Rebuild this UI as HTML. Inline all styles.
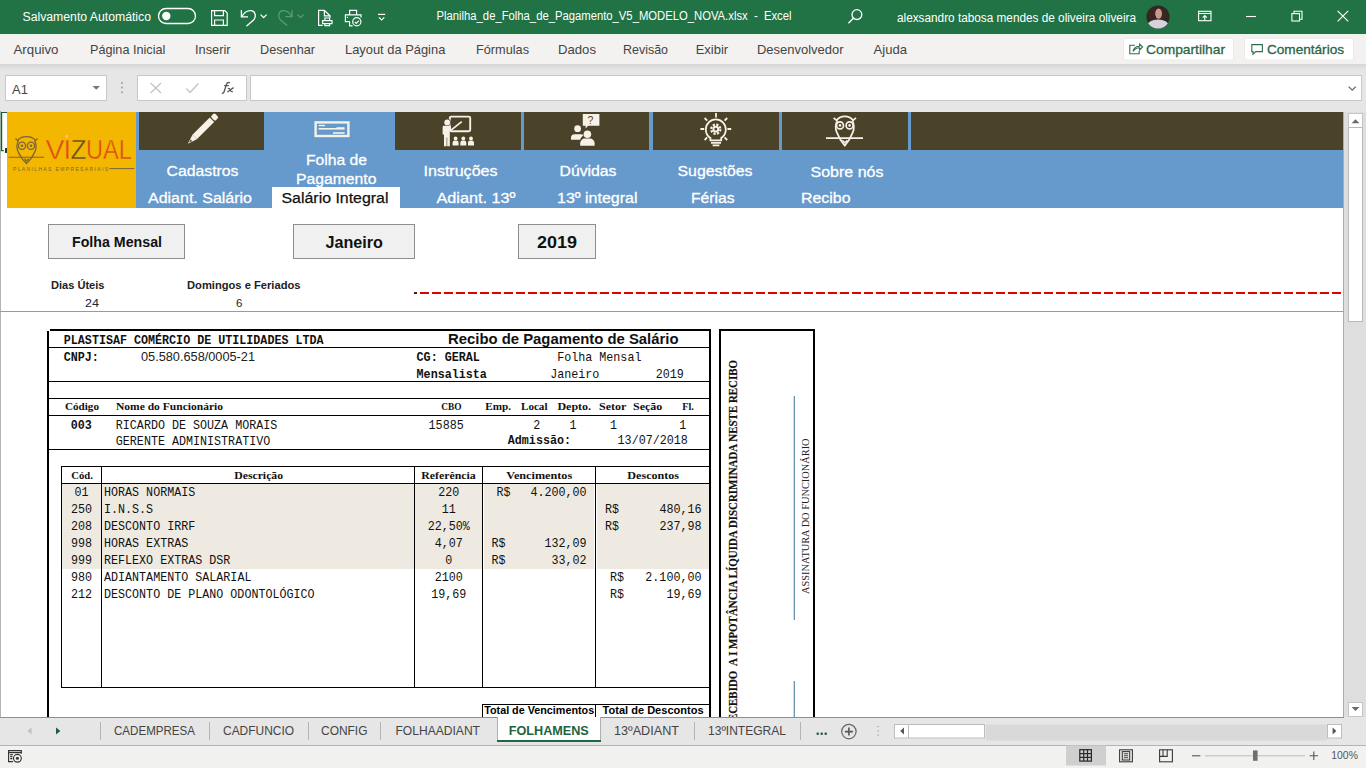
<!DOCTYPE html>
<html><head><meta charset="utf-8">
<style>
*{margin:0;padding:0;box-sizing:border-box}
html,body{width:1366px;height:768px;overflow:hidden;background:#fff}
svg{position:absolute;left:0;top:0;display:block}
text{font-family:"Liberation Sans",sans-serif;white-space:pre}
.m,.m text{font-family:"Liberation Mono",monospace}
.s,.s text{font-family:"Liberation Serif",serif}
</style></head><body>
<svg width="1366" height="768" viewBox="0 0 1366 768">
<defs>
<linearGradient id="shade" x1="0" y1="0" x2="0" y2="1">
<stop offset="0" stop-color="#d6d6d6"/><stop offset="1" stop-color="#e6e6e6"/>
</linearGradient>
</defs>
<!-- ===== TITLE BAR ===== -->
<g id="titlebar">
<rect x="0" y="0" width="1366" height="34" fill="#217346"/>
<text x="22.5" y="21" font-size="12.5" fill="#fff" textLength="128.5" lengthAdjust="spacingAndGlyphs">Salvamento Automático</text>
<rect x="158.5" y="8.5" width="37" height="15" rx="7.5" fill="none" stroke="#fff" stroke-width="1.3"/>
<circle cx="166.3" cy="16" r="4.2" fill="#fff"/>
<!-- save -->
<g fill="none" stroke="#fff" stroke-width="1.2">
<path d="M211.6 10.6h13.2l2.4 2.4v12.4h-15.6z"/>
<path d="M214.6 10.6v5h8.8v-5"/>
<path d="M214.6 25.4v-5.4h8.8v5.4"/>
</g>
<!-- undo -->
<g fill="none" stroke="#fff" stroke-width="1.3">
<path d="M241.4 10v6.8h6.6"/>
<path d="M241.9 16.3C244.6 12 248.4 10.2 251.4 10.7C255.6 11.5 256.4 16.6 253.8 19.8L246.4 26.2"/>
<path d="M260.6 14.6l3 3l3-3"/>
</g>
<!-- redo faded -->
<g fill="none" stroke="#5a9a76" stroke-width="1.3">
<path d="M292.1 10v6.6h-6.6"/>
<path d="M291.6 16.1C289 12 285.5 10.2 282.5 10.6C278.4 11.4 277.6 16.6 280.2 19.8L287.2 25.4"/>
<path d="M297.6 14.6l3 3l3-3"/>
</g>
<!-- print preview -->
<g fill="none" stroke="#fff" stroke-width="1.2">
<path d="M322.6 25.4h-4v-15h5.8l5.6 5.4v2"/>
<path d="M324.4 10.4v5.4h5.6"/>
<rect x="322.6" y="20.6" width="9.4" height="3"/>
<path d="M324.9 20.6v-2.6h4.7v2.6M324.9 23.6v2h4.7v-2"/>
</g>
<!-- print check -->
<g fill="none" stroke="#fff" stroke-width="1.2">
<path d="M349.6 14.8v-4.4h7v4.4"/>
<path d="M349.6 21.6h-4.2v-6.8h15.6v2.6"/>
<path d="M349.6 21.6v4.2h3"/>
<circle cx="356.8" cy="21.8" r="4.1"/>
<path d="M354.8 21.8l1.5 1.5l2.6-2.6"/>
</g>
<circle cx="347.4" cy="17.4" r="0.7" fill="#fff"/>
<!-- customize -->
<g fill="none" stroke="#fff" stroke-width="1.2">
<path d="M378 14.4h7.2"/>
<path d="M378.9 17.4l2.7 2.5l2.7-2.5"/>
</g>
<text x="436.5" y="20" font-size="12.3" fill="#fff" textLength="355" lengthAdjust="spacingAndGlyphs">Planilha_de_Folha_de_Pagamento_V5_MODELO_NOVA.xlsx  -  Excel</text>
<!-- search -->
<g fill="none" stroke="#fff" stroke-width="1.3">
<circle cx="856.9" cy="14.6" r="4.9"/>
<path d="M853.4 18.2l-5 5"/>
</g>
<text x="897" y="21.5" font-size="12.5" fill="#fff" textLength="239" lengthAdjust="spacingAndGlyphs">alexsandro tabosa mendes de oliveira oliveira</text>
<!-- avatar -->
<clipPath id="av"><circle cx="1158" cy="17" r="11.6"/></clipPath>
<g clip-path="url(#av)">
<rect x="1146" y="5" width="24" height="24" fill="#2c2a22"/>
<ellipse cx="1157" cy="15" rx="8.5" ry="8" fill="#3d2622"/>
<ellipse cx="1158.6" cy="13.6" rx="3.4" ry="5.2" fill="#c89a8e"/>
<ellipse cx="1158" cy="25.6" rx="10.8" ry="6" fill="#d6d3dd"/>
</g>
<!-- ribbon display -->
<g fill="none" stroke="#fff" stroke-width="1.1">
<rect x="1198.6" y="11.3" width="12.4" height="9.4"/>
<path d="M1198.6 13.5h12.4"/>
<path d="M1204.8 20.4v-4.8M1202.7 17.6l2.1-2.1l2.1 2.1"/>
</g>
<!-- minimize -->
<path d="M1246 16.5h10" stroke="#fff" stroke-width="1.1"/>
<!-- restore -->
<g fill="none" stroke="#fff" stroke-width="1.1">
<rect x="1291.9" y="13.6" width="7.6" height="7.4"/>
<path d="M1294 13.6v-2.3h8v8h-2.5"/>
</g>
<!-- close -->
<path d="M1337.6 10.8l10.6 10.6M1348.2 10.8l-10.6 10.6" stroke="#fff" stroke-width="1.15"/>
</g>
<!-- ===== MENU ===== -->
<g id="menubar">
<rect x="0" y="34" width="1366" height="30" fill="#f3f2f1"/>
<rect x="0" y="34" width="1366" height="1.4" fill="#e9f6ec"/>
<g font-size="13" fill="#444">
<text x="13.5" y="54" textLength="45" lengthAdjust="spacingAndGlyphs">Arquivo</text>
<text x="90" y="54" textLength="75.3" lengthAdjust="spacingAndGlyphs">Página Inicial</text>
<text x="195" y="54" textLength="35.5" lengthAdjust="spacingAndGlyphs">Inserir</text>
<text x="260" y="54" textLength="55" lengthAdjust="spacingAndGlyphs">Desenhar</text>
<text x="345" y="54" textLength="100.3" lengthAdjust="spacingAndGlyphs">Layout da Página</text>
<text x="476" y="54" textLength="53" lengthAdjust="spacingAndGlyphs">Fórmulas</text>
<text x="558" y="54" textLength="38" lengthAdjust="spacingAndGlyphs">Dados</text>
<text x="623" y="54" textLength="45" lengthAdjust="spacingAndGlyphs">Revisão</text>
<text x="695.7" y="54" textLength="32.5" lengthAdjust="spacingAndGlyphs">Exibir</text>
<text x="757" y="54" textLength="86.5" lengthAdjust="spacingAndGlyphs">Desenvolvedor</text>
<text x="873.5" y="54" textLength="33.5" lengthAdjust="spacingAndGlyphs">Ajuda</text>
</g>
<rect x="1123.5" y="38.5" width="110" height="21.5" rx="2" fill="#fff" stroke="#ecebe9"/>
<g fill="none" stroke="#2d6d4a" stroke-width="1.1">
<path d="M1135 45.2h-5.2v8.6h9.4v-3"/>
<path d="M1133 51.4c0.6-3.4 3-5.2 6.6-5.2v-2.2l3 3l-3 3v-2.2c-2.8 0-4.8 1-6.6 3.6z"/>
</g>
<text x="1146" y="54" font-size="13.4" fill="#2a6646" stroke="#2a6646" stroke-width="0.3" textLength="79" lengthAdjust="spacingAndGlyphs">Compartilhar</text>
<rect x="1244.5" y="38.5" width="109" height="21.5" rx="2" fill="#fff" stroke="#ecebe9"/>
<path d="M1251.8 44.6h10.6v7h-6.6l-2.8 2.6v-2.6h-1.2z" fill="none" stroke="#2d6d4a" stroke-width="1.1"/>
<text x="1267" y="54" font-size="13.4" fill="#2a6646" stroke="#2a6646" stroke-width="0.3" textLength="77" lengthAdjust="spacingAndGlyphs">Comentários</text>
</g>
<!-- ===== FORMULA BAR ===== -->
<g id="formulabar">
<rect x="0" y="64" width="1366" height="48" fill="#e6e6e6"/>
<rect x="0" y="64" width="1366" height="6" fill="url(#shade)"/>
<rect x="5.5" y="75.5" width="101" height="25" fill="#fff" stroke="#c8c8c8"/>
<text x="12.1" y="93.5" font-size="13" fill="#444" textLength="15.8" lengthAdjust="spacingAndGlyphs">A1</text>
<path d="M92.5 86h7.5l-3.75 3.8z" fill="#777"/>
<g fill="#a0a0a0"><circle cx="122" cy="83" r="1"/><circle cx="122" cy="87.6" r="1"/><circle cx="122" cy="92.2" r="1"/></g>
<rect x="137.5" y="75.5" width="109" height="25" fill="#fff" stroke="#c8c8c8"/>
<path d="M150.6 83l10.4 10M161 83l-10.4 10" stroke="#c4c4c4" stroke-width="1.3"/>
<path d="M186.4 88.4l3.6 4l8.4-9" fill="none" stroke="#c4c4c4" stroke-width="1.4"/>
<g fill="none" stroke="#5a5a5a" stroke-width="1.35" stroke-linecap="round">
<path d="M222.4 93.4c1 -0.2 1.6-1 2-2.4l2-6.6c0.5-1.6 1.4-2.2 3-1.8"/>
<path d="M224.6 85.6h3.8"/>
<path d="M228.4 88.4c1 0 1.4 0.4 1.8 1.4l0.6 1.2c0.4 0.6 0.8 0.8 1.6 0.6M233.2 87.9l-5.4 3.9"/>
</g>
<rect x="250.5" y="75.5" width="1111" height="25" fill="#fff" stroke="#c8c8c8"/>
<path d="M1348.6 86.6l3.6 3.6l3.6-3.6" fill="none" stroke="#666" stroke-width="1.3"/>
</g>
<!-- ===== GRID ===== -->
<g id="grid">
<rect x="0" y="112" width="1343" height="605" fill="#fff"/>
<rect x="0" y="111" width="1" height="606" fill="#b4b4b4"/>
<!-- selection A1 -->
<rect x="0" y="111" width="1" height="42" fill="#94b49c"/>
<rect x="1" y="112" width="1.2" height="39" fill="#1e5a3a"/>
<rect x="1" y="112" width="6" height="1" fill="#1e5a3a"/>
<rect x="1" y="150" width="2.8" height="1.2" fill="#1e5a3a"/>
<rect x="5" y="148" width="2" height="5" fill="#26402a"/>
<!-- logo -->
<rect x="7" y="112" width="129" height="96" fill="#f3b700"/>
<g id="owl" fill="none" stroke="#7b6638" stroke-width="1.3">
<path d="M17.6 140.6C19.4 137.8 22.6 136.6 26.5 136.6S33.6 137.8 35.4 140.6"/>
<path d="M15.4 138.4l3.2 2.8M37.6 138.4l-3.2 2.8"/>
<path d="M18.2 141C16.6 144.2 16.6 148.2 18 151.6C19.8 156 23 160.4 26.5 163.6C30 160.4 33.2 156 35 151.6C36.4 148.2 36.4 144.2 34.8 141"/>
<circle cx="22" cy="145.8" r="3.6"/><circle cx="31" cy="145.8" r="3.6"/>
<path d="M24.4 158.6l2.1 2.4l2.1-2.4"/>
</g>
<circle cx="22" cy="145.8" r="1.3" fill="#7b6638"/><circle cx="31" cy="145.8" r="1.3" fill="#7b6638"/>
<path d="M8.5 157.3h35.5" stroke="#7b6638" stroke-width="1.1"/>
<g font-size="27.5" stroke="#f3b700" stroke-width="0.5">
<text x="45.5" y="158.8" fill="#dc4a1e" textLength="19" lengthAdjust="spacingAndGlyphs">V</text>
<text x="63.5" y="158.8" fill="#dc4a1e">I</text>
<text x="70.5" y="158.8" fill="#5b4a2c" textLength="16" lengthAdjust="spacingAndGlyphs">Z</text>
<text x="86" y="158.8" fill="#dc4a1e" textLength="46" lengthAdjust="spacingAndGlyphs">UAL</text>
</g>
<circle cx="66.8" cy="136.5" r="1.4" fill="#f7c96a"/>
<text x="13" y="170.5" font-size="5" fill="#7b6638" textLength="95" lengthAdjust="spacing">PLANILHAS EMPRESARIAIS</text>
<path d="M109.3 168.6h25" stroke="#7b6638" stroke-width="1"/>
<!-- nav -->
<rect x="136" y="112" width="1207" height="96" fill="#6699cc"/>
<g fill="#4b4329">
<rect x="139" y="112" width="125" height="38"/>
<rect x="395" y="112" width="126" height="38"/>
<rect x="524" y="112" width="125" height="38"/>
<rect x="653" y="112" width="126" height="38"/>
<rect x="782" y="112" width="126" height="38"/>
<rect x="911" y="112" width="432" height="38"/>
</g>
<rect x="272" y="187" width="128" height="21" fill="#fff"/>
<!-- pencil -->
<g transform="translate(202.3 129.4) rotate(45)">
<rect x="-3.1" y="-20.2" width="6.2" height="5.4" rx="1.6" fill="#f6f2e8"/>
<rect x="-3.1" y="-13.6" width="6.2" height="24.4" fill="#f6f2e8"/>
<path d="M-3.1 10.8h6.2l-3.1 9.6z" fill="#f6f2e8"/>
<path d="M-1.1 15.4h2.2l-1.1 3z" fill="#4b4329"/>
</g>
<!-- cheque -->
<rect x="315.6" y="122.4" width="32.8" height="13.6" fill="none" stroke="#f6f2e8" stroke-width="2.4"/>
<g fill="#f6f2e8">
<rect x="318.6" y="124.8" width="6.4" height="1.4"/><rect x="318.6" y="128" width="26" height="1.6"/><rect x="336.5" y="127.2" width="8" height="1"/><rect x="333" y="132.2" width="11.6" height="1.6"/>
</g>
<!-- instructor -->
<rect x="449.8" y="116.6" width="20.4" height="14.6" rx="1.4" fill="none" stroke="#f6f2e8" stroke-width="1.9"/>
<g fill="#f6f2e8">
<circle cx="447.2" cy="122.4" r="3.7" fill="#4b4329"/><circle cx="447.2" cy="122.4" r="2.9"/>
<path d="M443.2 125.8h6.6l1.2 1.4v2.8l-1.2 0.8v15.4h-2.6v-8.6h-0.6v8.6h-2.6v-11.4l-0.8 -0.2l-0.6-0.4v-7z"/>
<circle cx="455.6" cy="138.4" r="1.9"/><path d="M452.6 145.6v-2.8a2.2 2.2 0 0 1 2.2-2.2h1.6a2.2 2.2 0 0 1 2.2 2.2v2.8z"/>
<circle cx="463.3" cy="138.4" r="1.9"/><path d="M460.3 145.6v-2.8a2.2 2.2 0 0 1 2.2-2.2h1.6a2.2 2.2 0 0 1 2.2 2.2v2.8z"/>
<circle cx="471" cy="138.4" r="1.9"/><path d="M468 145.6v-2.8a2.2 2.2 0 0 1 2.2-2.2h1.6a2.2 2.2 0 0 1 2.2 2.2v2.8z"/>
</g>
<path d="M450.4 130.6l11.4-9" stroke="#f6f2e8" stroke-width="1.7"/>
<!-- duvidas -->
<path d="M582.8 114h16.6v11.8h-11.2l-2.6 2.8v-2.8h-2.8z" fill="#f6f2e8"/>
<text x="587.6" y="123.8" font-size="10.5" fill="#4b4329">?</text>
<g fill="#f6f2e8">
<circle cx="577.6" cy="128.7" r="3.4"/>
<path d="M571 139.8v-2a3.6 3.6 0 0 1 3.6-3.6h6.4a3.6 3.6 0 0 1 2.6 1.1c-1.8 1.2-3 2.8-3.4 4.5z"/>
<circle cx="587.4" cy="134.3" r="4.6" fill="#4b4329"/><circle cx="587.4" cy="134.3" r="3.8"/>
<path d="M579.4 146.4v-3.2a5.2 5.2 0 0 1 5.2-5.2h5.6a5.2 5.2 0 0 1 5.2 5.2v3.2z" fill="#4b4329"/><path d="M580.2 145.8v-2.6a4.6 4.6 0 0 1 4.6-4.6h5.2a4.6 4.6 0 0 1 4.6 4.6v2.6z"/>
</g>
<!-- bulb -->
<g transform="translate(0 -1.4)">
<g fill="none" stroke="#f6f2e8" stroke-width="1.8">
<path d="M710.4 139.4c-2.8-2-4.6-5.2-4.6-8.6a10 10 0 0 1 20 0c0 3.4-1.8 6.6-4.6 8.6v2.4h-10.8z"/>
<path d="M716 114.4v4.4M700.4 130.4h3.8M727.4 130.4h3.8M704.6 119.4l2.6 2.6M727.2 119.4l-2.6 2.6M704.6 141.4l2.6-2.6M727.2 141.4l-2.6-2.6"/>
<path d="M711 144.2h10M712.6 146.8h6.8"/>
</g>
<circle cx="715.8" cy="130.6" r="4.6" fill="none" stroke="#f6f2e8" stroke-width="2.2" stroke-dasharray="2.2 1.4"/>
<circle cx="715.8" cy="130.6" r="2.4" fill="none" stroke="#f6f2e8" stroke-width="2"/>
</g>
<!-- owl -->
<g fill="none" stroke="#f6f2e8" stroke-width="1.7">
<path d="M836.4 120.6C838.4 117.6 841.4 116.4 844.8 116.4S851.2 117.6 853.2 120.6"/>
<path d="M833.6 117.8l3.6 3M856 117.8l-3.6 3"/>
<path d="M837.2 121C835.4 124.4 835.2 128.6 836.8 132.4C838.6 137.2 841.2 141.6 844.8 145.6C848.4 141.6 851 137.2 852.8 132.4C854.4 128.6 854.2 124.4 852.4 121"/>
<circle cx="840" cy="125.4" r="3.5"/><circle cx="849.6" cy="125.4" r="3.5"/>
</g>
<circle cx="840" cy="125.4" r="1.3" fill="#f6f2e8"/><circle cx="849.6" cy="125.4" r="1.3" fill="#f6f2e8"/>
<path d="M826 138.2h37" stroke="#f6f2e8" stroke-width="1.8"/>
<path d="M842.4 140.2l2.4 2.6l2.4-2.6" fill="none" stroke="#f6f2e8" stroke-width="1.3"/>
<g font-size="15.5" fill="#fff" stroke="#fff" stroke-width="0.3">
<text x="166.5" y="176" textLength="72" lengthAdjust="spacingAndGlyphs">Cadastros</text>
<text x="306" y="165" textLength="61" lengthAdjust="spacingAndGlyphs">Folha de</text>
<text x="296" y="183.5" textLength="80.5" lengthAdjust="spacingAndGlyphs">Pagamento</text>
<text x="423.5" y="176" textLength="74" lengthAdjust="spacingAndGlyphs">Instruções</text>
<text x="559.5" y="176" textLength="57" lengthAdjust="spacingAndGlyphs">Dúvidas</text>
<text x="677.5" y="176" textLength="75" lengthAdjust="spacingAndGlyphs">Sugestões</text>
<text x="810.5" y="177" textLength="73" lengthAdjust="spacingAndGlyphs">Sobre nós</text>
<text x="148" y="202.5" textLength="104" lengthAdjust="spacingAndGlyphs">Adiant. Salário</text>
<text x="436.5" y="202.5" textLength="79" lengthAdjust="spacingAndGlyphs">Adiant. 13º</text>
<text x="557" y="202.5" textLength="80.5" lengthAdjust="spacingAndGlyphs">13º integral</text>
<text x="691" y="202.5" textLength="43.5" lengthAdjust="spacingAndGlyphs">Férias</text>
<text x="801" y="202.5" textLength="49.5" lengthAdjust="spacingAndGlyphs">Recibo</text>
</g>
<text x="281.5" y="202.5" font-size="15.5" fill="#111" stroke="#111" stroke-width="0.25" textLength="107" lengthAdjust="spacingAndGlyphs">Salário Integral</text>
<!-- buttons -->
<rect x="48.5" y="224.5" width="136" height="34" fill="#f0f0f0" stroke="#8e8e8e"/>
<text x="72" y="247.2" font-size="14.5" font-weight="bold" fill="#111" textLength="90" lengthAdjust="spacingAndGlyphs">Folha Mensal</text>
<rect x="293.5" y="224.5" width="121" height="34" fill="#f0f0f0" stroke="#8e8e8e"/>
<text x="325.5" y="248.2" font-size="17" font-weight="bold" fill="#111" textLength="57.5" lengthAdjust="spacingAndGlyphs">Janeiro</text>
<rect x="518.5" y="224.5" width="77" height="34" fill="#f0f0f0" stroke="#8e8e8e"/>
<text x="537" y="248.2" font-size="17" font-weight="bold" fill="#111" textLength="40" lengthAdjust="spacingAndGlyphs">2019</text>
<text x="51" y="288.8" font-size="11.5" font-weight="bold" fill="#222" textLength="53.5" lengthAdjust="spacingAndGlyphs">Dias Úteis</text>
<text x="187" y="288.8" font-size="11.5" font-weight="bold" fill="#222" textLength="113.5" lengthAdjust="spacingAndGlyphs">Domingos e Feriados</text>
<text x="85" y="306.8" font-size="11.5" fill="#222" textLength="14" lengthAdjust="spacingAndGlyphs">24</text>
<text x="236" y="306.8" font-size="11.5" fill="#222">6</text>
<rect x="414" y="292" width="3" height="2" fill="#5a1010"/>
<path d="M420 293H1343" stroke="#e00000" stroke-width="2" stroke-dasharray="9 3"/>
<rect x="0" y="311" width="1343" height="1" fill="#9a9a9a"/>
<!-- receipt outer -->
<g fill="#000">
<rect x="50" y="329" width="661" height="2"/>
<rect x="47" y="331" width="2" height="386"/>
<rect x="709" y="329" width="2" height="388"/>
<rect x="49" y="347" width="660" height="1"/>
<rect x="49" y="381" width="660" height="1"/>
<rect x="49" y="398" width="660" height="1"/>
<rect x="49" y="415" width="660" height="1"/>
<rect x="49" y="449" width="660" height="1"/>
</g>
<!-- beige -->
<g fill="#eeeae2">
<rect x="62" y="484" width="352" height="85"/>
<rect x="415" y="484" width="67" height="85"/>
<rect x="484" y="484" width="110" height="85"/>
<rect x="597" y="484" width="112" height="85"/>
</g>
<!-- inner table -->
<g fill="#000">
<rect x="61" y="466" width="648" height="1"/>
<rect x="61" y="483" width="648" height="1"/>
<rect x="61" y="687" width="648" height="1"/>
<rect x="61" y="466" width="1" height="222"/>
<rect x="101" y="466" width="1" height="222"/>
<rect x="414" y="466" width="1" height="222"/>
<rect x="482" y="466" width="1" height="222"/>
<rect x="595" y="466" width="1" height="222"/>
<rect x="482" y="704" width="227" height="1"/>
<rect x="482" y="704" width="1" height="13"/>
<rect x="595" y="704" width="1" height="13"/>
</g>
<g class="m" font-size="12.9" fill="#111" lengthAdjust="spacingAndGlyphs">
<text x="63.8" y="344" font-weight="bold" textLength="259.74" lengthAdjust="spacingAndGlyphs">PLASTISAF COMÉRCIO DE UTILIDADES LTDA</text>
<text x="63.8" y="361" font-weight="bold" textLength="35.10" lengthAdjust="spacingAndGlyphs">CNPJ:</text>
<text x="416.6" y="361" font-weight="bold" textLength="63.18" lengthAdjust="spacingAndGlyphs">CG: GERAL</text>
<text x="416.6" y="377.6" font-weight="bold" textLength="70.20" lengthAdjust="spacingAndGlyphs">Mensalista</text>
<text x="557.2" y="360.6" textLength="84.24" lengthAdjust="spacingAndGlyphs">Folha Mensal</text>
<text x="550.2" y="377.7" textLength="49.14" lengthAdjust="spacingAndGlyphs">Janeiro</text>
<text x="655.8" y="377.7" textLength="28.08" lengthAdjust="spacingAndGlyphs">2019</text>
<text x="70.8" y="429" font-weight="bold" textLength="21.06" lengthAdjust="spacingAndGlyphs">003</text>
<text x="115.8" y="429" textLength="161.46" lengthAdjust="spacingAndGlyphs">RICARDO DE SOUZA MORAIS</text>
<text x="115.8" y="444.8" textLength="154.44" lengthAdjust="spacingAndGlyphs">GERENTE ADMINISTRATIVO</text>
<text x="428.6" y="429.2" textLength="35.10" lengthAdjust="spacingAndGlyphs">15885</text>
<text x="533.2" y="429.2" textLength="7.02" lengthAdjust="spacingAndGlyphs">2</text>
<text x="569.4" y="429.2" textLength="7.02" lengthAdjust="spacingAndGlyphs">1</text>
<text x="610" y="429.2" textLength="7.02" lengthAdjust="spacingAndGlyphs">1</text>
<text x="679.2" y="429.2" textLength="7.02" lengthAdjust="spacingAndGlyphs">1</text>
<text x="507.8" y="444.4" font-weight="bold" textLength="63.18" lengthAdjust="spacingAndGlyphs">Admissão:</text>
<text x="617.6" y="444.4" textLength="70.20" lengthAdjust="spacingAndGlyphs">13/07/2018</text>
</g>
<text x="448" y="343.7" font-size="14" font-weight="bold" fill="#111" textLength="230.5" lengthAdjust="spacingAndGlyphs">Recibo de Pagamento de Salário</text>
<text x="141" y="361" font-size="13.2" fill="#222" textLength="114" lengthAdjust="spacingAndGlyphs">05.580.658/0005-21</text>
<g class="s" font-size="11" font-weight="bold" fill="#111">
<text x="65" y="409.7" textLength="34" lengthAdjust="spacingAndGlyphs">Código</text>
<text x="116" y="409.7" textLength="107" lengthAdjust="spacingAndGlyphs">Nome do Funcionário</text>
<text x="441.3" y="409.7" textLength="20.3" lengthAdjust="spacingAndGlyphs">CBO</text>
<text x="485.3" y="409.7" textLength="25.8" lengthAdjust="spacingAndGlyphs">Emp.</text>
<text x="521" y="409.7" textLength="26.5" lengthAdjust="spacingAndGlyphs">Local</text>
<text x="557.4" y="409.7" textLength="33.7" lengthAdjust="spacingAndGlyphs">Depto.</text>
<text x="599" y="409.7" textLength="27.3" lengthAdjust="spacingAndGlyphs">Setor</text>
<text x="633" y="409.7" textLength="29.3" lengthAdjust="spacingAndGlyphs">Seção</text>
<text x="682.3" y="409.7" textLength="11.6" lengthAdjust="spacingAndGlyphs">Fl.</text>
<text x="71.3" y="478.8" textLength="21.6" lengthAdjust="spacingAndGlyphs">Cód.</text>
<text x="234.2" y="478.8" textLength="48.9" lengthAdjust="spacingAndGlyphs">Descrição</text>
<text x="421.2" y="478.8" textLength="54.6" lengthAdjust="spacingAndGlyphs">Referência</text>
<text x="506.2" y="478.8" textLength="66" lengthAdjust="spacingAndGlyphs">Vencimentos</text>
<text x="627.3" y="478.8" textLength="51.8" lengthAdjust="spacingAndGlyphs">Descontos</text>
</g>
<g class="m" font-size="12.9" fill="#111" lengthAdjust="spacingAndGlyphs">
<text x="81.6" y="496" text-anchor="middle" textLength="14.04" lengthAdjust="spacingAndGlyphs">01</text>
<text x="104" y="496" textLength="91.26" lengthAdjust="spacingAndGlyphs">HORAS NORMAIS</text>
<text x="448.7" y="496" text-anchor="middle" textLength="21.06" lengthAdjust="spacingAndGlyphs">220</text>
<text x="496.5" y="496" textLength="14.04" lengthAdjust="spacingAndGlyphs">R$</text>
<text x="586.6" y="496" text-anchor="end" textLength="56.16" lengthAdjust="spacingAndGlyphs">4.200,00</text>
<text x="81.6" y="513" text-anchor="middle" textLength="21.06" lengthAdjust="spacingAndGlyphs">250</text>
<text x="104" y="513" textLength="49.14" lengthAdjust="spacingAndGlyphs">I.N.S.S</text>
<text x="448.7" y="513" text-anchor="middle" textLength="14.04" lengthAdjust="spacingAndGlyphs">11</text>
<text x="605.0" y="513" textLength="14.04" lengthAdjust="spacingAndGlyphs">R$</text>
<text x="701.5" y="513" text-anchor="end" textLength="42.12" lengthAdjust="spacingAndGlyphs">480,16</text>
<text x="81.6" y="530" text-anchor="middle" textLength="21.06" lengthAdjust="spacingAndGlyphs">208</text>
<text x="104" y="530" textLength="91.26" lengthAdjust="spacingAndGlyphs">DESCONTO IRRF</text>
<text x="448.7" y="530" text-anchor="middle" textLength="42.12" lengthAdjust="spacingAndGlyphs">22,50%</text>
<text x="605.0" y="530" textLength="14.04" lengthAdjust="spacingAndGlyphs">R$</text>
<text x="701.5" y="530" text-anchor="end" textLength="42.12" lengthAdjust="spacingAndGlyphs">237,98</text>
<text x="81.6" y="547" text-anchor="middle" textLength="21.06" lengthAdjust="spacingAndGlyphs">998</text>
<text x="104" y="547" textLength="84.24" lengthAdjust="spacingAndGlyphs">HORAS EXTRAS</text>
<text x="448.7" y="547" text-anchor="middle" textLength="28.08" lengthAdjust="spacingAndGlyphs">4,07</text>
<text x="491.59999999999997" y="547" textLength="14.04" lengthAdjust="spacingAndGlyphs">R$</text>
<text x="586.6" y="547" text-anchor="end" textLength="42.12" lengthAdjust="spacingAndGlyphs">132,09</text>
<text x="81.6" y="564" text-anchor="middle" textLength="21.06" lengthAdjust="spacingAndGlyphs">999</text>
<text x="104" y="564" textLength="126.36" lengthAdjust="spacingAndGlyphs">REFLEXO EXTRAS DSR</text>
<text x="448.7" y="564" text-anchor="middle" textLength="7.02" lengthAdjust="spacingAndGlyphs">0</text>
<text x="491.59999999999997" y="564" textLength="14.04" lengthAdjust="spacingAndGlyphs">R$</text>
<text x="586.6" y="564" text-anchor="end" textLength="35.10" lengthAdjust="spacingAndGlyphs">33,02</text>
<text x="81.6" y="581" text-anchor="middle" textLength="21.06" lengthAdjust="spacingAndGlyphs">980</text>
<text x="104" y="581" textLength="147.42" lengthAdjust="spacingAndGlyphs">ADIANTAMENTO SALARIAL</text>
<text x="448.7" y="581" text-anchor="middle" textLength="28.08" lengthAdjust="spacingAndGlyphs">2100</text>
<text x="609.9" y="581" textLength="14.04" lengthAdjust="spacingAndGlyphs">R$</text>
<text x="701.5" y="581" text-anchor="end" textLength="56.16" lengthAdjust="spacingAndGlyphs">2.100,00</text>
<text x="81.6" y="598" text-anchor="middle" textLength="21.06" lengthAdjust="spacingAndGlyphs">212</text>
<text x="104" y="598" textLength="210.60" lengthAdjust="spacingAndGlyphs">DESCONTO DE PLANO ODONTOLÓGICO</text>
<text x="448.7" y="598" text-anchor="middle" textLength="35.10" lengthAdjust="spacingAndGlyphs">19,69</text>
<text x="609.9" y="598" textLength="14.04" lengthAdjust="spacingAndGlyphs">R$</text>
<text x="701.5" y="598" text-anchor="end" textLength="35.10" lengthAdjust="spacingAndGlyphs">19,69</text>
</g>
<text x="484.2" y="714.2" font-size="11" font-weight="bold" fill="#000" textLength="110" lengthAdjust="spacingAndGlyphs">Total de Vencimentos</text>
<text x="602.6" y="714.2" font-size="11" font-weight="bold" fill="#000" textLength="101" lengthAdjust="spacingAndGlyphs">Total de Descontos</text>
<!-- signature box -->
<g fill="#000">
<rect x="719" y="329" width="2" height="388"/>
<rect x="719" y="329" width="95" height="2"/>
<rect x="813" y="329" width="2" height="388"/>
</g>
<rect x="793.7" y="396" width="1.2" height="224" fill="#5c8aa8"/>
<rect x="793.7" y="681" width="1.2" height="36" fill="#5c8aa8"/>
<text transform="translate(737.2 360) rotate(-90)" text-anchor="end" class="s" font-size="12.6" font-weight="bold" fill="#111" stroke="#111" stroke-width="0.2" textLength="369" lengthAdjust="spacingAndGlyphs">RECEBIDO  A I MPOTÂNCIA LÍQUIDA DISCRIMINADA NESTE RECIBO</text>
<text transform="translate(809.2 438.4) rotate(-90)" text-anchor="end" class="s" font-size="10.5" fill="#222" textLength="155.5" lengthAdjust="spacingAndGlyphs">ASSINATURA DO FUNCIONÁRIO</text>
</g>
<!-- ===== SCROLL / TABS / STATUS ===== -->
<g id="bottom">
<rect x="1343" y="112" width="23" height="605" fill="#dedede"/>
<rect x="1343" y="112" width="1" height="605" fill="#ababab"/>
<rect x="1348.5" y="113.5" width="14" height="14" fill="#fff" stroke="#c6c6c6"/>
<path d="M1351.6 123.2h7.8l-3.9-4z" fill="#6a6a6a"/>
<rect x="1348.5" y="127.5" width="14" height="194" fill="#fff" stroke="#b9b9b9"/>
<rect x="1348.5" y="702.5" width="14" height="14" fill="#fff" stroke="#c6c6c6"/>
<path d="M1351.6 707h7.8l-3.9 4z" fill="#6a6a6a"/>
<!-- tabs -->
<rect x="0" y="717" width="1366" height="28" fill="#e6e6e6"/>
<rect x="0" y="717" width="1344" height="1" fill="#8e8e8e"/>
<path d="M31.6 727.4v7.2l-4.2-3.6z" fill="#c2c2c2"/>
<path d="M56 727.4v7.2l4.4-3.6z" fill="#1e5e3b"/>
<g fill="#b5b5b5">
<rect x="100" y="722" width="1" height="18"/>
<rect x="209" y="722" width="1" height="18"/>
<rect x="308" y="722" width="1" height="18"/>
<rect x="380" y="722" width="1" height="18"/>
<rect x="694" y="722" width="1" height="18"/>
<rect x="800" y="722" width="1" height="18"/>
</g>
<rect x="497" y="717" width="104" height="25" fill="#fff"/>
<rect x="497" y="717" width="1" height="25" fill="#b0b0b0"/>
<rect x="600" y="717" width="1" height="25" fill="#b0b0b0"/>
<rect x="497" y="740" width="104" height="2" fill="#1e6b43"/>
<g font-size="13" fill="#444">
<text x="114" y="735" textLength="81" lengthAdjust="spacingAndGlyphs">CADEMPRESA</text>
<text x="223" y="735" textLength="71" lengthAdjust="spacingAndGlyphs">CADFUNCIO</text>
<text x="321" y="735" textLength="46.5" lengthAdjust="spacingAndGlyphs">CONFIG</text>
<text x="395.5" y="735" textLength="84.5" lengthAdjust="spacingAndGlyphs">FOLHAADIANT</text>
<text x="614" y="735" textLength="65" lengthAdjust="spacingAndGlyphs">13ºADIANT</text>
<text x="708" y="735" textLength="78" lengthAdjust="spacingAndGlyphs">13ºINTEGRAL</text>
</g>
<text x="508.8" y="735" font-size="13" font-weight="bold" fill="#20643f" textLength="80" lengthAdjust="spacingAndGlyphs">FOLHAMENS</text>
<g fill="#1f4f3a"><rect x="816.6" y="732.6" width="2.2" height="2.2"/><rect x="820.6" y="732.6" width="2.2" height="2.2"/><rect x="824.6" y="732.6" width="2.2" height="2.2"/></g>
<circle cx="848.9" cy="731.6" r="7.2" fill="none" stroke="#666" stroke-width="1.2"/>
<path d="M848.9 727.6v8M844.9 731.6h8" stroke="#555" stroke-width="1.6"/>
<g fill="#9a9a9a"><rect x="877.5" y="726" width="1.2" height="1.2"/><rect x="877.5" y="730.3" width="1.2" height="1.2"/><rect x="877.5" y="734.6" width="1.2" height="1.2"/></g>
<rect x="894.5" y="724.5" width="90" height="13.5" fill="#fff" stroke="#bdbdbd"/>
<rect x="908" y="724.5" width="1" height="13.5" fill="#bdbdbd"/>
<path d="M904 727.6v7l-3.8-3.5z" fill="#555"/>
<rect x="986" y="724.5" width="341" height="16" fill="#d9d9d9"/>
<rect x="1327.5" y="724.5" width="14" height="13.5" fill="#fff" stroke="#bdbdbd"/>
<path d="M1332.6 727.6v7l3.8-3.5z" fill="#555"/>
<rect x="0" y="745" width="1366" height="23" fill="#f1f1f0"/>
<rect x="0" y="745" width="1366" height="1" fill="#b4b4b4"/>
<!-- status icon -->
<g fill="none" stroke="#333" stroke-width="1.15">
<path d="M13 761.6H8.6V750.6H21.3V753.8"/>
<path d="M8.6 752.6H21.3"/>
<path d="M10.2 754.6h2.6M10.2 756.6h2.2M10.2 758.6h2.2"/>
<circle cx="17.4" cy="758.3" r="3.9"/>
</g>
<circle cx="17.4" cy="758.3" r="1.5" fill="#333"/>
<rect x="1066" y="745.5" width="40" height="20" fill="#cfcfcf"/>
<g fill="none" stroke="#2b2b2b" stroke-width="1.25">
<rect x="1079.8" y="749.7" width="11.6" height="11.4"/>
<path d="M1083.7 749.7v11.4M1087.5 749.7v11.4M1079.8 753.5h11.6M1079.8 757.3h11.6"/>
</g>
<g fill="none" stroke="#3a3a3a" stroke-width="1.1">
<rect x="1119.6" y="749.8" width="12.8" height="12"/>
<rect x="1122.3" y="751.6" width="7.4" height="8.4"/>
<path d="M1123.8 753.8h4.4M1123.8 755.8h4.4M1123.8 757.8h4.4"/>
<rect x="1159.6" y="749.8" width="12.8" height="12"/>
<path d="M1163 749.8v6.6M1167.2 749.8v6.6h-7.6"/>
</g>
<path d="M1192 755.8h8.4" stroke="#555" stroke-width="1.1"/>
<rect x="1205" y="755.3" width="100" height="1" fill="#bcbcbc"/>
<rect x="1253" y="750.4" width="4.6" height="10.4" fill="#6f6f6f"/>
<path d="M1309.6 755.8h8.4M1313.8 751.6v8.4" stroke="#555" stroke-width="1.1"/>
<text x="1331.3" y="759.3" font-size="11.5" fill="#555" textLength="26.6" lengthAdjust="spacingAndGlyphs">100%</text>
</g>
</svg>
</body></html>
